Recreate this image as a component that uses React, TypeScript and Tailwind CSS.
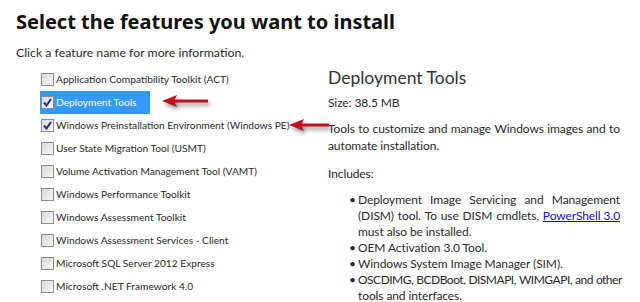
import React from "react";

const features = [
  { name: "Application Compatibility Toolkit (ACT)", checked: false },
  { name: "Deployment Tools", checked: true, selected: true },
  { name: "Windows Preinstallation Environment (Windows PE)", checked: true },
  { name: "User State Migration Tool (USMT)", checked: false },
  { name: "Volume Activation Management Tool (VAMT)", checked: false },
  { name: "Windows Performance Toolkit", checked: false },
  { name: "Windows Assessment Toolkit", checked: false },
  { name: "Windows Assessment Services - Client", checked: false },
  { name: "Microsoft SQL Server 2012 Express", checked: false },
  { name: "Microsoft .NET Framework 4.0", checked: false },
];

const CheckBox = ({ checked }: { checked: boolean }) => (
  <span className="w-[13px] h-[13px] shrink-0 border border-[#8e8f8f] bg-gradient-to-br from-[#d8d8d8] to-[#f7f7f7] flex items-center justify-center">
    {checked && (
      <svg width="9" height="9" viewBox="0 0 9 9">
        <path d="M1 4.5 L3.5 7.5 L8 1" fill="none" stroke="#1d2f86" strokeWidth="2" />
      </svg>
    )}
  </span>
);

// red callout arrow pointing left
const Arrow = ({ width, className }: { width: number; className: string }) => (
  <svg
    width={width}
    height="16"
    viewBox={`0 0 ${width} 16`}
    className={`absolute drop-shadow-[2px_3px_2px_rgba(0,0,0,0.45)] ${className}`}
  >
    <rect x="10" y="6.5" width={width - 12} height="3" fill="#c0101a" />
    <path d="M0 8 L15 2 L12 8 L15 14 Z" fill="#c0101a" />
  </svg>
);

// justified line: words spread over the full width
const J = ({ words, className = "" }: { words: React.ReactNode[]; className?: string }) => (
  <span className={`flex justify-between gap-[3px] whitespace-nowrap ${className}`}>
    {words.map((w, i) => (
      <span key={i}>{w}</span>
    ))}
  </span>
);

const w = (s: string) => s.split(" ");

export default function App() {
  return (
    <div className="w-[640px] h-[302px] bg-white overflow-hidden relative font-['Lato',sans-serif] text-[#2a2a2a]">
      <h1 className="pl-[16px] pt-[8px] text-[20px] font-bold leading-[28px] text-[#111] font-['Noto_Sans',sans-serif]">
        Select the features you want to install
      </h1>
      <p className="pl-[16px] mt-[8px] text-[12.3px] leading-[18px]">Click a feature name for more information.</p>

      <div className="flex mt-[6px]">
        <ul className="w-[328px] pl-[40px] shrink-0">
          {features.map((f) => (
            <li key={f.name} className="h-[23px] flex items-center">
              <span
                className={`h-[23px] flex items-center gap-[2px] pl-[1px] text-[10.2px] whitespace-nowrap ${
                  f.selected ? "bg-[#3399ff] text-white w-[110px]" : ""
                }`}
              >
                <CheckBox checked={f.checked} />
                {f.name}
              </span>
            </li>
          ))}
        </ul>

        <div className="w-[292px] shrink-0 text-[12px] tracking-[-0.1px]">
          <h2 className="text-[17.5px] leading-[24px] -mt-[2px] text-[#333] tracking-normal">Deployment Tools</h2>
          <p className="mt-[5px] leading-[16px]">Size: 38.5 MB</p>
          <div className="mt-[9px] leading-[17px]">
            <J words={w("Tools to customize and manage Windows images and to")} />
            <span>automate installation.</span>
          </div>
          <p className="mt-[12px] leading-[16px]">Includes:</p>
          <ul className="mt-[10px] pl-[21px] leading-[16px]">
            <li className="flex">
              <span className="w-[9px] shrink-0">•</span>
              <span className="flex-1">
                <J words={w("Deployment Image Servicing and Management")} />
                <J
                  words={[
                    ...w("(DISM) tool. To use DISM cmdlets,"),
                    <span className="text-[#1a0dcc] underline">PowerShell 3.0</span>,
                  ]}
                />
                must also be installed.
              </span>
            </li>
            <li className="flex">
              <span className="w-[9px] shrink-0">•</span>
              <span>OEM Activation 3.0 Tool.</span>
            </li>
            <li className="flex">
              <span className="w-[9px] shrink-0">•</span>
              <span>Windows System Image Manager (SIM).</span>
            </li>
            <li className="flex">
              <span className="w-[9px] shrink-0">•</span>
              <span className="flex-1">
                <J words={w("OSCDIMG, BCDBoot, DISMAPI, WIMGAPI, and other")} className="tracking-[-0.5px]" />
                tools and interfaces.
              </span>
            </li>
          </ul>
        </div>
      </div>

      <Arrow width={48} className="left-[162px] top-[93px]" />
      <Arrow width={42} className="left-[289px] top-[117px]" />
    </div>
  );
}
